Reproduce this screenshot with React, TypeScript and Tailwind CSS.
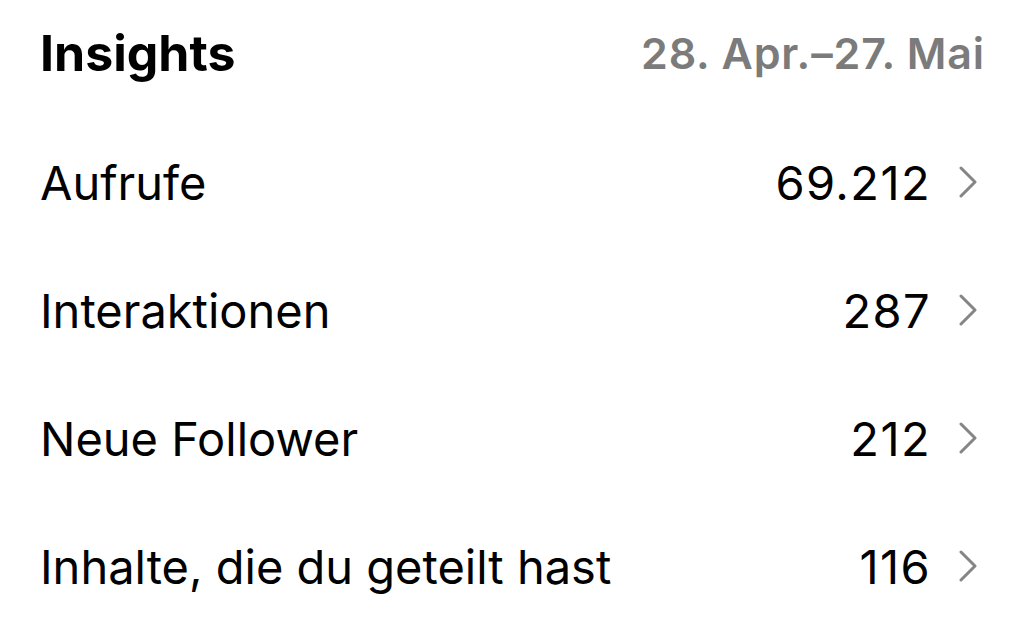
const ROWS = [
  { label: "Aufrufe", value: "69.212" },
  { label: "Interaktionen", value: "287" },
  { label: "Neue Follower", value: "212" },
  { label: "Inhalte, die du geteilt hast", value: "116" },
];

function Chevron() {
  return (
    <svg width="20" height="32" viewBox="0 0 20 32" fill="none" className="shrink-0">
      <path
        d="M3 2 L17 16 L3 30"
        stroke="#858585"
        strokeWidth="3"
        strokeLinecap="round"
        strokeLinejoin="round"
      />
    </svg>
  );
}

export default function App() {
  return (
    <div
      className="w-[1024px] h-[632px] bg-white text-black overflow-hidden"
      style={{ fontFamily: "Inter, 'Noto Sans', sans-serif" }}
    >
      <div className="flex items-center justify-between h-[118px] pl-10 pr-[39px] pb-3">
        <h1 className="text-[50px] font-bold leading-none">Insights</h1>
        <span className="text-[43px] font-semibold leading-none text-[#7b7b7b] tracking-[0.02em]">
          28. Apr.–27. Mai
        </span>
      </div>
      <ul>
        {ROWS.map((row) => (
          <li key={row.label} className="flex items-center h-[128px] pl-10 pr-[46px]">
            <span className="flex-1 text-[47px] leading-none">{row.label}</span>
            <span className="text-[47px] leading-none tracking-[0.03em] mr-[27px]">{row.value}</span>
            <Chevron />
          </li>
        ))}
      </ul>
    </div>
  );
}
